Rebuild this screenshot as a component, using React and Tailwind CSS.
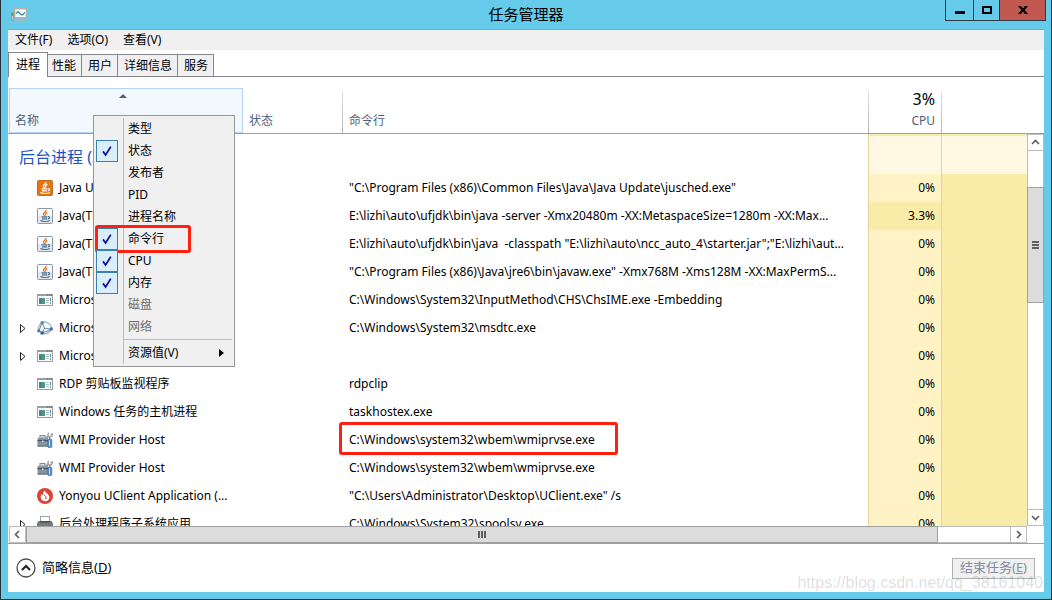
const menus = ["文件(F)", "选项(O)", "查看(V)"];

const tabs = ["进程", "性能", "用户", "详细信息", "服务"];

const columnMenu = [
	{ label: "类型" },
	{ label: "状态", checked: true },
	{ label: "发布者" },
	{ label: "PID" },
	{ label: "进程名称" },
	{ label: "命令行", checked: true, marked: true },
	{ label: "CPU", checked: true },
	{ label: "内存", checked: true },
	{ label: "磁盘", disabled: true },
	{ label: "网络", disabled: true },
];

const processes = [
	{ icon: "javaOrange", name: "Java Update Scheduler", cmd: "\"C:\\Program Files (x86)\\Common Files\\Java\\Java Update\\jusched.exe\"", cpu: "0%" },
	{ icon: "java", name: "Java(TM) Platform SE", cmd: "E:\\lizhi\\auto\\ufjdk\\bin\\java -server -Xmx20480m -XX:MetaspaceSize=1280m -XX:Max...", cpu: "3.3%", hot: true },
	{ icon: "java", name: "Java(TM) Platform SE", cmd: "E:\\lizhi\\auto\\ufjdk\\bin\\java  -classpath \"E:\\lizhi\\auto\\ncc_auto_4\\starter.jar\";\"E:\\lizhi\\aut...", cpu: "0%" },
	{ icon: "java", name: "Java(TM) Platform SE", cmd: "\"C:\\Program Files (x86)\\Java\\jre6\\bin\\javaw.exe\" -Xmx768M -Xms128M -XX:MaxPermS...", cpu: "0%" },
	{ icon: "app", name: "Microsoft IME", cmd: "C:\\Windows\\System32\\InputMethod\\CHS\\ChsIME.exe -Embedding", cpu: "0%" },
	{ icon: "dtc", name: "Microsoft 分布式事务", cmd: "C:\\Windows\\System32\\msdtc.exe", cpu: "0%", expandable: true },
	{ icon: "app", name: "Microsoft", cmd: "", cpu: "0%", expandable: true },
	{ icon: "app", name: "RDP 剪贴板监视程序", cmd: "rdpclip", cpu: "0%" },
	{ icon: "app", name: "Windows 任务的主机进程", cmd: "taskhostex.exe", cpu: "0%" },
	{ icon: "wmi", name: "WMI Provider Host", cmd: "C:\\Windows\\system32\\wbem\\wmiprvse.exe", cpu: "0%", marked: true },
	{ icon: "wmi", name: "WMI Provider Host", cmd: "C:\\Windows\\system32\\wbem\\wmiprvse.exe", cpu: "0%" },
	{ icon: "yonyou", name: "Yonyou UClient Application (...", cmd: "\"C:\\Users\\Administrator\\Desktop\\UClient.exe\" /s", cpu: "0%" },
	{ icon: "printer", name: "后台处理程序子系统应用", cmd: "C:\\Windows\\System32\\spoolsv.exe", cpu: "0%", expandable: true },
];

const JavaIcon = ({ orange }) => (
	<svg width="16" height="16" viewBox="0 0 16 16" fill="none">
		<rect x="0.5" y="0.5" width="15" height="15" rx="1" fill={orange ? "#e8740c" : "#e3e8ec"} stroke={orange ? "#c06a2c" : "#8799ab"} />
		{!orange && <rect x="1" y="1" width="14" height="7" fill="#f6f8f9" />}
		<path d="M9 2C9.6 3.8 6.2 4.4 6.4 6.2C6.5 7 7.4 7.4 7.6 8M10.4 4.4C8.4 5.2 8.2 6 9 7.4" stroke={orange ? "#fff" : "#e07a1f"} strokeWidth="1.3" />
		<path d="M4.4 8.8H10.4M5 10.8H10M11 8.6C13.4 8.4 12.8 10.8 10.8 11M3.4 12.6C5.4 13.8 10.6 13.8 12.8 12.4" stroke={orange ? "#fff" : "#4a6a8c"} strokeWidth="1.2" />
	</svg>
);

const AppIcon = () => (
	<svg width="16" height="16" viewBox="0 0 16 16">
		<rect x="0.5" y="2.5" width="15" height="11" fill="#fff" stroke="#979ea4" />
		<rect x="0" y="2" width="16" height="2" fill="#979ea4" />
		<path d="M10 2.9h1M12 2.9h1M14 2.9h1" stroke="#4c535a" />
		<rect x="2" y="6" width="6" height="6" fill="#4a9c86" />
		<path d="M2 6h3v6H2z" fill="#41709f" opacity=".55" />
		<path d="M9 6.5h3M9 8.5h3M9 10.5h3" stroke="#b4bbc0" />
		<path d="M13.5 6v3.5M13.5 10.5v1.5" stroke="#5f8f8b" />
	</svg>
);

const DtcIcon = () => (
	<svg width="16" height="16" viewBox="0 0 16 16" fill="none">
		<path d="M6 2C10.4 1.6 14.4 4.6 14.6 8M13.6 10.4C11.4 13.2 8 14.4 5.4 13.6M1.4 10C1 7.6 2.6 4.4 4.6 3" stroke="#b3c0cd" strokeWidth="1.7" />
		<path d="M5 2.4L7.6 8.2L14 9M7.6 8.2L5 13M5 3L2 10.6L5 13L14 9.4" stroke="#7e93a8" strokeWidth="1.1" />
		<circle cx="5.2" cy="2.6" r="1.7" fill="#4d88bf" />
		<circle cx="14.2" cy="9" r="1.7" fill="#3570aa" />
		<circle cx="5" cy="13" r="1.7" fill="#2d6199" />
		<circle cx="1.8" cy="10.8" r="1.6" fill="#3f79b2" />
	</svg>
);

const WmiIcon = () => (
	<svg width="16" height="16" viewBox="0 0 16 16" fill="none">
		<path d="M3 5V3.6H8V5" stroke="#7f8b96" strokeWidth="1.2" />
		<path d="M0.5 6.4L2.4 5H11V14.4H0.5z" fill="#8394a4" />
		<path d="M2 5.6H10" stroke="#b3c0cc" />
		<path d="M0.5 8.6H11" stroke="#46525d" strokeWidth="1.3" />
		<path d="M5 8.5h1.5v1.5H5z" fill="#dfe5ea" />
		<path d="M0.5 14H11" stroke="#5a6874" />
		<path d="M8.6 6.4L12 3.4" stroke="#98a0a7" strokeWidth="2" />
		<path d="M12 0.8C10.2 1.6 10.8 4.6 12.8 4.8C14.6 5 15.8 3.4 15.2 1.8L13.4 3" stroke="#9aa2a8" strokeWidth="1.3" />
		<path d="M12.6 5V8" stroke="#7c868f" strokeWidth="1.4" />
		<rect x="11" y="7.2" width="3.8" height="8.4" rx="1.2" fill="#5b8dc6" stroke="#3c638f" strokeWidth=".7" />
		<path d="M12.5 8.4v6" stroke="#d3e5f7" />
	</svg>
);

const YonyouIcon = () => (
	<svg width="16" height="16" viewBox="0 0 16 16">
		<circle cx="8" cy="8" r="8" fill="#dd4133" />
		<path d="M7.6 2.2C8.2 4.6 12.4 6.2 12.4 9.2A4.4 4.4 0 0 1 3.7 9.6C3.5 8 4.4 7 4.8 6C5.4 6.8 5.6 7.2 6.2 7.4C5.9 5.4 6.4 3.4 7.6 2.2z" fill="#fff" />
		<path d="M7 6.8C8.8 8 9.8 9.4 8.6 11.4" stroke="#dd4133" fill="none" />
	</svg>
);

const PrinterIcon = () => (
	<svg width="16" height="16" viewBox="0 0 16 16">
		<rect x="3.5" y="0.5" width="9" height="6" fill="#fff" stroke="#a0a3a6" />
		<path d="M1.4 5H14.6L16 7.6V12H0V7.6z" fill="#777b7e" />
		<rect x="3" y="5" width="10" height="1.6" fill="#4c5053" />
		<rect x="3" y="10" width="10" height="5" fill="#d8dadc" />
	</svg>
);

const icons = {
	javaOrange: <JavaIcon orange />,
	java: <JavaIcon />,
	app: <AppIcon />,
	dtc: <DtcIcon />,
	wmi: <WmiIcon />,
	yonyou: <YonyouIcon />,
	printer: <PrinterIcon />,
};

const TaskManagerIcon = () => (
	<svg width="17" height="16" viewBox="0 0 17 16" fill="none">
		<rect x="1.5" y="5.5" width="2" height="8" fill="#b9bec2" stroke="#9aa0a4" />
		<path d="M2.5 6v3" stroke="#3fae49" strokeWidth="1.4" />
		<rect x="4.7" y="1.7" width="11.6" height="9" fill="#f4fafc" stroke="#b5b0aa" strokeWidth="1.4" />
		<path d="M6 6.5L8 4.6L10.4 7L12.4 8L15 5.4" stroke="#2f86b5" strokeWidth="1.2" />
		<path d="M8.5 11.5h4V13H8.5zM6.5 13h8v2H6.5z" fill="#b0b2b3" />
	</svg>
);

const Chevron = ({ className }) => (
	<svg width="9" height="9" viewBox="0 0 9 9" fill="none" className={className}>
		<path d="M1 6L4.5 2.5L8 6" stroke="#606060" strokeWidth="1.7" />
	</svg>
);

const TitleBar = () => (
	<header className="grid h-[29px] grid-cols-[1fr_auto_1fr]">
		<div className="pt-[7px] pl-[9px]">
			<TaskManagerIcon />
		</div>
		<h1 className="text-[15px] leading-[29px] text-black">任务管理器</h1>
		<div className="mr-[5px] flex h-[21px] justify-end">
			<button aria-label="最小化" className="flex w-7 items-center justify-center border-b border-l border-[#2e3b44]">
				<svg width="10" height="8"><path d="M0 5h10v3H0z" /></svg>
			</button>
			<button aria-label="最大化" className="flex w-[26px] items-center justify-center border-b border-l border-[#2e3b44]">
				<svg width="10" height="8" fill="none"><rect x="1" y="1" width="8" height="6" stroke="#000" strokeWidth="2" /></svg>
			</button>
			<button aria-label="关闭" className="flex w-[47px] items-center justify-center border-x border-b border-[#2e3b44] bg-[#c1584f]">
				<svg width="10" height="8" viewBox="0 0 10 8"><path d="M0 0H3L5 2.4L7 0H10L6.6 4L10 8H7L5 5.6L3 8H0L3.4 4z" /></svg>
			</button>
		</div>
	</header>
);

const ColumnMenu = () => (
	<div role="menu" className="absolute top-[38px] left-[85px] w-[142px] border border-[#979797] bg-[#f0f0f0] pt-[2px] pb-px text-xs text-black">
		<span className="absolute top-[2px] bottom-[2px] left-[29px] w-px bg-[#bdbdbd]" />
		{columnMenu.map((item) => (
			<button
				key={item.label}
				role="menuitemcheckbox"
				aria-checked={!!item.checked}
				disabled={item.disabled}
				className={`relative flex h-[22px] w-full items-center pl-[2px] text-left ${item.disabled ? "text-[#6d6d6d]" : ""}`}
			>
				<span className={`mr-[10px] flex size-[22px] items-center justify-center ${item.checked ? "border border-[#3c7fb1] bg-[#d9edfb]" : ""}`}>
					{item.checked && (
						<svg width="10" height="11" viewBox="0 0 10 11" fill="none"><path d="M1 5.4L3.6 9L8.8 0.6" stroke="#0c12a1" strokeWidth="1.8" /></svg>
					)}
				</span>
				{item.label}
				{item.marked && <span className="absolute -top-[3px] left-px h-7 w-24 rounded-[3px] border-3 border-[#ff2010]" />}
			</button>
		))}
		<div className="mt-px mr-[2px] ml-[30px] h-px bg-[#bdbdbd]" />
		<button role="menuitem" aria-haspopup="menu" className="flex h-[25px] w-full items-center justify-between pr-[10px] pl-[34px]">
			资源值(V)
			<svg width="5" height="8"><path d="M0 0L5 4L0 8z" /></svg>
		</button>
	</div>
);

const HeaderCell = ({ children, className = "" }) => (
	<th className={`relative border-b border-[#a0a0a0] p-0 align-bottom font-normal text-[#4c607a] ${className}`}>
		{children}
		<span className="absolute top-[2px] right-0 bottom-0 w-px bg-linear-to-b from-[#e4e4e4] to-[#b4b4b4]" />
	</th>
);

const ProcessTable = () => (
	<table className="w-full table-fixed border-separate border-spacing-0 text-left text-xs text-black">
		<colgroup>
			<col className="w-[235px]" />
			<col className="w-[100px]" />
			<col />
			<col className="w-[73px]" />
			<col className="w-[85px]" />
		</colgroup>
		<thead>
			<tr className="h-[46px]">
				<th aria-sort="ascending" className="border-b border-[#a0a0a0] p-0 pl-px font-normal text-[#4c607a]">
					<div className="flex h-[45px] flex-col justify-between border border-[#b5d3f7] bg-[#f3f8fe] px-[5px] pt-[5px] pb-[3px]">
						<svg width="8" height="4" className="mr-[6px] self-center"><path d="M4 0L8 4H0z" fill="#4c607a" /></svg>
						<span className="leading-4">名称</span>
					</div>
				</th>
				<HeaderCell><div className="pb-1 pl-[6px] leading-4">状态</div></HeaderCell>
				<HeaderCell><div className="pb-1 pl-[6px] leading-4">命令行</div></HeaderCell>
				<HeaderCell className="text-right">
					<div className="pr-[7px] text-base leading-5 text-black">3%</div>
					<div className="pt-1 pr-[7px] pb-1 leading-4">CPU</div>
				</HeaderCell>
				<th className="border-b border-[#a0a0a0] p-0" />
			</tr>
		</thead>
		<tbody>
			<tr className="h-10">
				<th colSpan={2} className="p-0 pt-[6px] pl-[11px] text-base leading-5 font-normal text-[#1f53c4]">后台进程 (23)</th>
				<td className="border-r border-[#e6d49a] p-0" />
				<td className="border-t-2 border-r border-t-[#f9eba8] border-r-[#e6d49a] bg-[#fff8e2] p-0" />
				<td className="border-t-2 border-t-[#f9eba8] bg-[#fff8e2] p-0" />
			</tr>
			{processes.map((p, i) => (
				<tr key={i} className="h-7">
					<td className="p-0">
						<div className="flex h-7 items-center whitespace-nowrap">
							<span className="flex w-[29px] pl-3">
								{p.expandable && (
									<svg width="6" height="9" fill="none"><path d="M0.5 0.5L5 4.5L0.5 8.5z" stroke="#222" /></svg>
								)}
							</span>
							{icons[p.icon]}
							<span className="pl-[6px]">{p.name}</span>
						</div>
					</td>
					<td className="p-0" />
					<td className="relative border-r border-[#e6d49a] p-0 pl-[6px]">
						<div className="overflow-hidden whitespace-pre">{p.cmd}</div>
						{p.marked && <span className="absolute -top-1 -left-1 h-[33px] w-[279px] rounded-[3px] border-3 border-[#ff2010]" />}
					</td>
					<td className={`border-r border-[#e6d49a] p-0 pr-[6px] text-right ${p.hot ? "bg-[#f9eba8]" : "bg-[#fff3c5]"}`}>{p.cpu}</td>
					<td className="bg-[#f9eba8] p-0" />
				</tr>
			))}
		</tbody>
	</table>
);

const VerticalScroll = () => (
	<div className="flex w-[17px] flex-col">
		<div className="h-[46px] border-b border-[#a0a0a0]" />
		<div className="flex flex-1 flex-col border-x border-[#bcbcbc]">
			<button aria-label="向上滚动" className="flex h-[17px] items-center justify-center border-y border-[#bcbcbc]"><Chevron /></button>
			<div className="grow-[36] basis-0" />
			<div className="-mx-px flex grow-[114] basis-0 flex-col items-center justify-center gap-px border border-[#a0a0a0] bg-[#dcdcdc]">
				<span className="h-[2px] w-[7px] bg-[#606060]" />
				<span className="h-[2px] w-[7px] bg-[#606060]" />
				<span className="h-[2px] w-[7px] bg-[#606060]" />
			</div>
			<div className="grow-[206] basis-0" />
			<button aria-label="向下滚动" className="flex h-[17px] items-center justify-center border-y border-[#bcbcbc]"><Chevron className="rotate-180" /></button>
		</div>
	</div>
);

const HorizontalScroll = () => (
	<div className="border-b border-[#a0a0a0] pr-[17px] pl-px">
		<div className="flex h-[17px] border-y border-[#bcbcbc]">
			<button aria-label="向左滚动" className="flex w-[17px] items-center justify-center border-x border-[#bcbcbc]"><Chevron className="-rotate-90" /></button>
			<div className="-my-px flex grow-[910] basis-0 items-center justify-center gap-px border border-[#a0a0a0] bg-[#dcdcdc]">
				<span className="h-[7px] w-[2px] bg-[#606060]" />
				<span className="h-[7px] w-[2px] bg-[#606060]" />
				<span className="h-[7px] w-[2px] bg-[#606060]" />
			</div>
			<div className="grow-[72] basis-0" />
			<button aria-label="向右滚动" className="flex w-[17px] items-center justify-center border-x border-[#bcbcbc]"><Chevron className="rotate-90" /></button>
		</div>
	</div>
);

const App = () => {
	return (
		<div className="relative flex h-screen flex-col border-x border-b border-[#26323b] bg-[#66cbea] font-['Noto_Sans','Noto_Sans_CJK_SC',sans-serif]">
			<TitleBar />
			<main className="mx-[7px] mb-[7px] flex min-h-0 flex-1 flex-col border-t border-[#5fb4cf] bg-white">
				<nav className="flex h-5 items-center gap-[15px] bg-[#f0f0f0] px-[7px] text-xs text-black">
					{menus.map((menu) => (
						<button key={menu}>{menu}</button>
					))}
				</nav>
				<div role="tablist" className="flex h-[27px] items-end border-b border-[#828790] text-xs text-black">
					{tabs.map((tab, i) => (
						<button
							key={tab}
							role="tab"
							aria-selected={i === 0}
							className={i === 0
								? "z-10 -mr-[2px] -mb-px h-[25px] border-x border-t border-[#828790] bg-white px-[7px]"
								: "h-[22px] border-t border-r border-[#828790] bg-[#f0f0f0] pr-[5px] pl-[6px]"}
						>
							{tab}
						</button>
					))}
				</div>
				<section className="relative flex min-h-0 flex-1 pt-[11px]">
					<div className="min-w-0 flex-1 overflow-hidden">
						<ProcessTable />
					</div>
					<VerticalScroll />
					<ColumnMenu />
				</section>
				<HorizontalScroll />
				<footer className="flex h-12 items-center justify-between pr-[9px] pl-2 text-[13px]">
					<button className="flex items-center gap-[6px] text-black">
						<svg width="20" height="20" viewBox="0 0 20 20" fill="none">
							<circle cx="10" cy="10" r="9" stroke="#4a4a4a" strokeWidth="1.3" />
							<path d="M6 12L10 8L14 12" stroke="#222" strokeWidth="2.2" />
						</svg>
						<span>简略信息(<u>D</u>)</span>
					</button>
					<button disabled className="flex h-[21px] w-[83px] items-center justify-center border border-[#adb2b5] bg-[#f0f0f0] text-[#838ba5]">
						<span>结束任务(<u>E</u>)</span>
					</button>
				</footer>
			</main>
			<span className="absolute right-2 bottom-[6px] font-['Liberation_Sans',sans-serif] text-base leading-5 text-black/15">https://blog.csdn.net/qq_38161040</span>
		</div>
	);
};

export default App;
